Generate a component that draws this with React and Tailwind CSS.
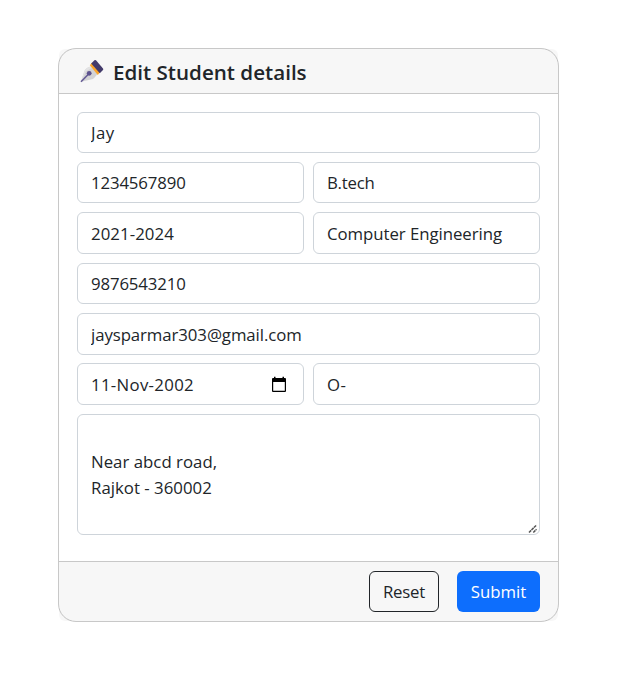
import React from "react";

const control =
  "block w-full min-w-0 rounded-[6px] border border-[#ced4da] bg-white px-[13px] text-[16.8px] text-[#212529] outline-none";

function Field({ label, value, height = "h-[41px]", tracking = "tracking-[-0.13px]" }) {
  return <input aria-label={label} defaultValue={value} className={`${control} ${height} ${tracking}`} />;
}

function PenIcon() {
  return (
    <svg width="24" height="24" viewBox="0 0 24 24" className="shrink-0" aria-hidden="true">
      <path d="M1 22.8 4.3 12.3Q5 9.9 7.5 8.8L11 7.2 17.6 15 14.4 18.7Q13.2 20.2 11 20.6Z" fill="#d3d3d5" />
      <path d="M1 22.8 4.3 12.3Q5 9.9 7.5 8.8L11 7.2 12.3 8.7 7 11.7Q5.3 12.8 4.8 14.9Z" fill="#e3e3e4" />
      <path d="M9.8 6.2 12.2 3.6 20.3 13 17.8 15.9Z" fill="#fca62b" />
      <path d="M11.2 4.5 14.4 1.3Q15.2.6 16 1.3L23 9.4Q23.6 10.2 23 11L19.8 14.3Z" fill="#433b6b" />
      <path d="M1 22.8 8.4 15.2" stroke="#635994" strokeWidth="1.5" />
      <circle cx="9.2" cy="14.3" r="2.4" fill="#5c528e" />
    </svg>
  );
}

function CalendarIcon() {
  return (
    <svg width="16" height="17" viewBox="0 0 16 17" className="mr-[3px] shrink-0" aria-hidden="true">
      <path d="M1 3Q1 2 2 2H3V.8H4.5V2H11.5V.8H13V2H14Q15 2 15 3V15Q15 16 14 16H2Q1 16 1 15ZM2.2 6V14.8H13.8V6Z" fill="#000" fillRule="evenodd" />
    </svg>
  );
}

export default function App() {
  return (
    <div className="h-[698px] w-[633px] bg-white pl-[58px] pt-[48px] font-['Open_Sans','Noto_Sans',sans-serif] text-[#212529]">
      <form className="flex h-[574px] w-[501px] flex-col rounded-[18px] border border-[#c8c8c8] bg-white" onSubmit={(e) => e.preventDefault()}>
        <header className="flex h-[45px] shrink-0 items-center gap-[9px] rounded-t-[6px] border-b border-[#c8c8c8] bg-black/[0.03] pl-[21px]">
          <PenIcon />
          <h1 className="whitespace-nowrap pt-px text-[20.6px] font-semibold leading-7">Edit Student details</h1>
        </header>

        <main className="flex flex-1 flex-col gap-[9px] px-[18px] pt-[18px]">
          <Field label="Name" value="Jay" tracking="tracking-[0.5px]" />
          <div className="grid grid-cols-2 gap-[9px]">
            <Field label="Enrollment number" value="1234567890" />
            <Field label="Degree" value="B.tech" tracking="tracking-[-0.25px]" />
          </div>
          <div className="grid grid-cols-2 gap-[9px]">
            <Field label="Batch" value="2021-2024" height="h-[42px]" tracking="tracking-[0.08px]" />
            <Field label="Department" value="Computer Engineering" height="h-[42px]" tracking="tracking-[-0.05px]" />
          </div>
          <Field label="Phone" value="9876543210" />
          <Field label="Email" value="jaysparmar303@gmail.com" height="h-[42px]" tracking="tracking-[-0.08px]" />
          <div className="-mt-px grid grid-cols-2 gap-[9px]">
            <div className="flex h-[42px] items-center justify-between rounded-[6px] border border-[#ced4da] px-[13px] text-[16.8px] tracking-[0.32px]">
              <span className="pt-px">11-Nov-2002</span>
              <CalendarIcon />
            </div>
            <Field label="Blood group" value="O-" height="h-[42px]" tracking="tracking-[0.5px]" />
          </div>
          <div className="relative">
            <textarea
              aria-label="Address"
              defaultValue={"\nNear abcd road,\nRajkot - 360002"}
              className={`${control} h-[121px] resize-none overflow-hidden pt-[8px] leading-[26px] tracking-[0.02px]`}
            />
            <svg width="10" height="10" viewBox="0 0 10 10" className="absolute bottom-px right-[2px]" aria-hidden="true">
              <path d="M1 8.5 8.5 1M5.3 8.5 8.5 5.3" stroke="#555" strokeWidth="1.5" strokeDasharray="3 .5" />
            </svg>
          </div>
        </main>

        <footer className="flex h-[60px] shrink-0 items-start justify-end gap-[18px] rounded-b-[6px] border-t border-[#c8c8c8] bg-black/[0.03] pr-[18px] pt-[9px]">
          <button type="reset" className="h-[41px] w-[70px] rounded-[6px] border border-[#212529] text-[16.8px] tracking-[-0.2px]">
            Reset
          </button>
          <button type="submit" className="h-[41px] w-[83px] rounded-[6px] bg-[#0d6efd] text-[16.8px] text-white">
            Submit
          </button>
        </footer>
      </form>
    </div>
  );
}
